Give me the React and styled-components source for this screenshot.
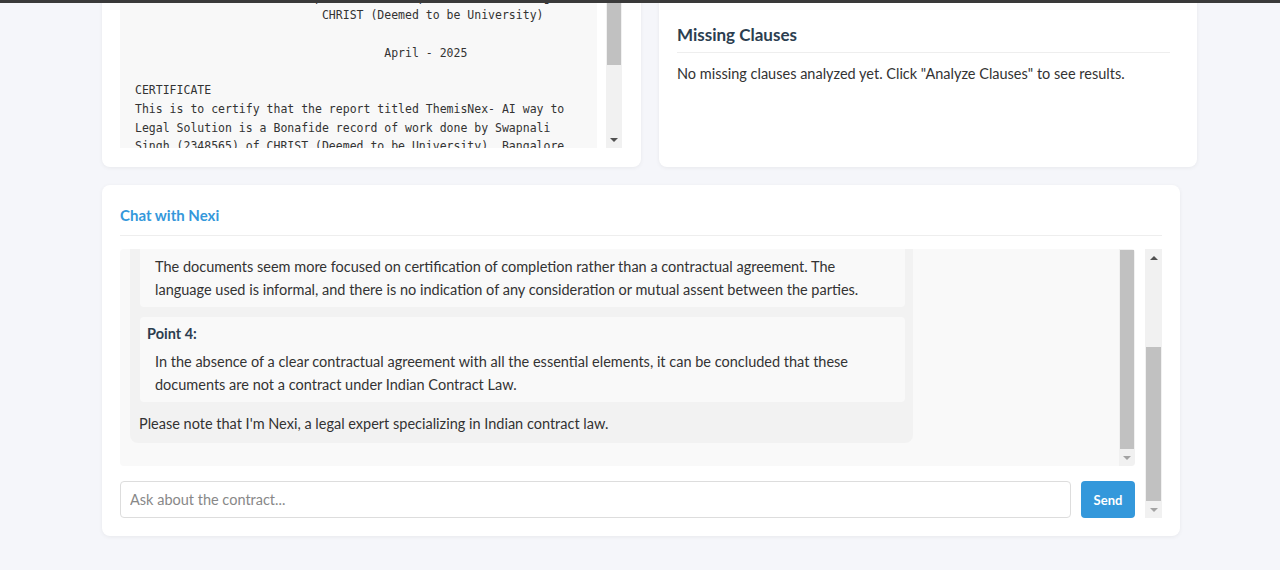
import React from 'react';
import styled, { createGlobalStyle } from 'styled-components';

const GlobalStyle = createGlobalStyle`
  html, body {
    margin: 0;
    padding: 0;
    background: #f5f6fa;
    font-family: Lato, 'Liberation Sans', sans-serif;
    color: #333;
    overflow: hidden;
  }
`;

const docText = [
  '                  in partial fulfilment of the requirements for the degree',
  '                        Department of Computer Science, Bangalore',
  '                           CHRIST (Deemed to be University)',
  '',
  '                                    April - 2025',
  '',
  'CERTIFICATE',
  'This is to certify that the report titled ThemisNex- AI way to',
  'Legal Solution is a Bonafide record of work done by Swapnali',
  'Singh (2348565) of CHRIST (Deemed to be University), Bangalore',
  'in partial fulfilment of the requirements of the degree.',
].join('\n');

const points = [
  {
    title: 'Point 1:',
    lines: ['The uploaded text is a certificate issued by a university and is not an agreement', 'between two or more parties.'],
  },
  {
    title: 'Point 2:',
    lines: ['There is no offer, acceptance or lawful consideration mentioned anywhere in the', 'documents provided for review.'],
  },
  {
    title: 'Point 3:',
    lines: [
      'The documents seem more focused on certification of completion rather than a contractual agreement. The',
      'language used is informal, and there is no indication of any consideration or mutual assent between the parties.',
    ],
  },
  {
    title: 'Point 4:',
    lines: [
      'In the absence of a clear contractual agreement with all the essential elements, it can be concluded that these',
      'documents are not a contract under Indian Contract Law.',
    ],
  },
];

function Scrollbar({ width = 16, up, down, downDim, thumbOffset, thumbSize }) {
  return (
    <Track $w={width}>
      {up && <Arrow $dir='up' />}
      <Rail>
        <Thumb $offset={thumbOffset} $size={thumbSize} />
      </Rail>
      {down && <Arrow $dir='down' $dim={downDim} />}
    </Track>
  );
}

export default function App() {
  return (
    <>
      <GlobalStyle />
      <TopBar />
      <Viewport>
        <Page>
          <TopRow>
            <Card $pad='18px 19px 19px 18px'>
              <DocRow>
                <DocBox>
                  <pre>{docText}</pre>
                </DocBox>
                <Scrollbar down thumbOffset={6} thumbSize={102} />
              </DocRow>
            </Card>
            <Card $pad='85px 27px 18px 18px'>
              <SectionTitle>Missing Clauses</SectionTitle>
              <Muted>No missing clauses analyzed yet. Click "Analyze Clauses" to see results.</Muted>
            </Card>
          </TopRow>

          <ChatCard>
            <ChatTitle>Chat with Nexi</ChatTitle>
            <ChatBody>
              <ChatColumn>
                <Messages>
                  <MessageList>
                    <Bubble>
                      <Intro>Based on the uploaded documents, here is my analysis:</Intro>
                      {points.map((pt) => (
                        <PointBox key={pt.title}>
                          <PointTitle>{pt.title}</PointTitle>
                          <PointText>
                            {pt.lines[0]}
                            <br />
                            {pt.lines[1]}
                          </PointText>
                        </PointBox>
                      ))}
                      <Intro>Please note that I'm Nexi, a legal expert specializing in Indian contract law.</Intro>
                    </Bubble>
                  </MessageList>
                  <Scrollbar width={16} down downDim thumbOffset={1} thumbSize={199} />
                </Messages>
                <InputRow>
                  <ChatInput placeholder='Ask about the contract...' />
                  <SendButton>Send</SendButton>
                </InputRow>
              </ChatColumn>
              <Scrollbar width={17} up down downDim thumbOffset={81} thumbSize={154} />
            </ChatBody>
          </ChatCard>
        </Page>
      </Viewport>
    </>
  );
}

const TopBar = styled.div`
  height: 3px;
  background: #3a3a3a;
`;

const Viewport = styled.div`
  height: 567px;
  overflow: hidden;
`;

const Page = styled.div`
  margin-top: -64px;
  padding-left: 102px;
  display: flex;
  flex-direction: column;
  gap: 18px;
`;

const TopRow = styled.div`
  width: 1095px;
  display: grid;
  grid-template-columns: 539px 538px;
  gap: 18px;
`;

const Card = styled.div`
  background: #fff;
  border-radius: 8px;
  box-shadow: 0 1px 4px rgba(0, 0, 0, 0.06);
  padding: ${(p) => p.$pad};
`;

const DocRow = styled.div`
  display: flex;
  gap: 9px;
  height: 191px;
`;

const DocBox = styled.div`
  flex: 1;
  background: #f8f8f8;
  border-radius: 4px 4px 0 0;
  overflow: hidden;
  pre {
    margin: 0;
    padding: 12px 15px;
    font-family: 'DejaVu Sans Mono', 'Liberation Mono', monospace;
    font-size: 11.5px;
    line-height: 18.7px;
    color: #333;
    white-space: pre;
  }
`;

const Track = styled.div`
  width: ${(p) => p.$w}px;
  flex: 0 0 ${(p) => p.$w}px;
  background: #f1f1f1;
  display: flex;
  flex-direction: column;
`;

const Arrow = styled.div`
  height: 17px;
  flex: 0 0 17px;
  display: flex;
  align-items: center;
  justify-content: center;
  &::after {
    content: '';
    border-left: 4px solid transparent;
    border-right: 4px solid transparent;
    ${(p) => (p.$dir === 'up' ? 'border-bottom' : 'border-top')}: 4px solid
      ${(p) => (p.$dim ? '#a3a3a3' : '#505050')};
  }
`;

const Rail = styled.div`
  flex: 1;
  display: flex;
  flex-direction: column;
  padding: 0 1px;
  overflow: hidden;
`;

const Thumb = styled.div`
  margin-top: ${(p) => p.$offset}px;
  height: ${(p) => p.$size}px;
  flex: 0 0 auto;
  background: #c1c1c1;
`;

const SectionTitle = styled.h3`
  margin: 0 0 11px;
  padding-bottom: 6px;
  border-bottom: 1px solid #eee;
  font-size: 17px;
  line-height: 22px;
  font-weight: 700;
  color: #2c3e50;
`;

const Muted = styled.p`
  margin: 0;
  font-size: 14.5px;
  line-height: 20px;
  color: #333;
`;

const ChatCard = styled.div`
  width: 1078px;
  box-sizing: border-box;
  background: #fff;
  border-radius: 8px;
  box-shadow: 0 1px 4px rgba(0, 0, 0, 0.06);
  padding: 18px;
`;

const ChatTitle = styled.h3`
  margin: 0 0 13px;
  padding: 0 0 8px;
  border-bottom: 1px solid #eee;
  font-size: 15px;
  line-height: 24px;
  font-weight: 700;
  color: #3498db;
`;

const ChatBody = styled.div`
  display: flex;
  gap: 10px;
`;

const ChatColumn = styled.div`
  flex: 1;
  min-width: 0;
  display: flex;
  flex-direction: column;
`;

const Messages = styled.div`
  height: 217px;
  display: flex;
  background: #f9f9f9;
  border-radius: 4px;
  overflow: hidden;
`;

const MessageList = styled.div`
  flex: 1;
  min-width: 0;
  display: flex;
  flex-direction: column;
  justify-content: flex-end;
  padding: 10px 10px 23px;
  overflow: hidden;
`;

const Bubble = styled.div`
  box-sizing: border-box;
  max-width: 80%;
  background: #f2f2f2;
  border-radius: 8px;
  padding: 8px 8px 8px 10px;
  font-size: 14.5px;
  line-height: 23px;
`;

const Intro = styled.p`
  margin: 0 0 0 -1px;
`;

const PointBox = styled.div`
  background: #f9f9f9;
  border-radius: 4px;
  padding: 6px 8px 6px 7px;
  margin: 10px 0;
  & + & {
    margin-top: 9px;
  }
`;

const PointTitle = styled.div`
  font-weight: 700;
  color: #2c3e50;
  line-height: 22px;
  margin-bottom: 5px;
`;

const PointText = styled.p`
  margin: 0 0 0 8px;
  white-space: nowrap;
`;

const InputRow = styled.div`
  display: flex;
  gap: 10px;
  margin-top: 15px;
`;

const ChatInput = styled.input`
  flex: 1;
  height: 37px;
  box-sizing: border-box;
  border: 1px solid #ddd;
  border-radius: 4px;
  padding: 0 9px;
  font-family: Lato, 'Liberation Sans', sans-serif;
  font-size: 14.5px;
  color: #333;
  outline: none;
  &::placeholder {
    color: #888;
  }
`;

const SendButton = styled.button`
  width: 54px;
  height: 37px;
  border: none;
  border-radius: 4px;
  background: #3498db;
  color: #fff;
  font-family: Lato, 'Liberation Sans', sans-serif;
  font-size: 13px;
  font-weight: 700;
`;
